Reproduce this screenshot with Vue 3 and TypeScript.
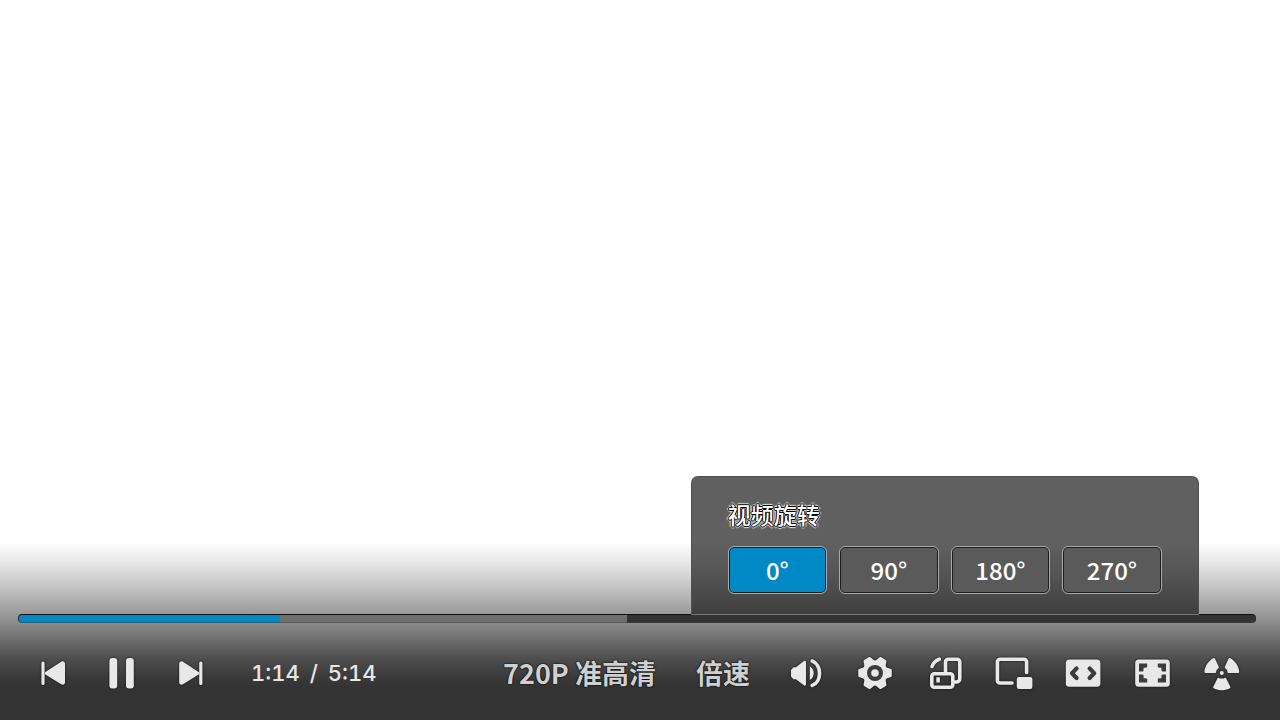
<script setup lang="ts">
import { computed, ref } from 'vue'

const angles = [0, 90, 180, 270]
const angle = ref(0)
const position = ref(212)
const buffered = 492
const playing = ref(true)

const trackStyle = computed(() => ({
  '--played': `${position.value / 10}%`,
  '--buffered': `${buffered / 10}%`,
}))
</script>

<template>
  <main class="player">
    <div class="panel">
      <input
        v-model.number="position"
        class="progress"
        type="range"
        min="0"
        max="1000"
        aria-label="播放进度"
        :style="trackStyle"
      />
      <div class="controls">
        <div class="transport">
          <button class="icon" type="button" aria-label="上一个">
            <svg viewBox="0 0 36 36">
              <rect x="6.4" y="6.5" width="3.2" height="23.5" rx="1.6" />
              <path d="M10 17.2 26.2 6.8c1.8-1 3.8-.2 3.8 2v18.5c0 2.2-2 3-3.8 2L10 19.3Z" />
            </svg>
          </button>
          <button class="icon" type="button" aria-label="暂停" @click="playing = !playing">
            <svg viewBox="0 0 36 36">
              <rect x="5.4" y="3" width="7.8" height="30.4" rx="3" />
              <rect x="22" y="3" width="7.8" height="30.4" rx="3" />
            </svg>
          </button>
          <button class="icon" type="button" aria-label="下一个">
            <svg viewBox="0 0 36 36">
              <rect x="26.2" y="6.5" width="3.2" height="23.5" rx="1.6" />
              <path d="M26 17.2 10 6.8c-1.8-1-3.8-.2-3.8 2v18.5c0 2.2 2 3 3.8 2L26 19.3Z" />
            </svg>
          </button>
        </div>
        <div class="time"><span>1:14</span><span>/</span><span>5:14</span></div>

        <button class="label quality" type="button">720P 准高清</button>
        <button class="label speed" type="button">倍速</button>

        <div class="tools">
          <button class="icon" type="button" aria-label="音量">
            <svg viewBox="0 0 36 36">
              <path d="M5.5 12.3H8L15.500 6.300c1.300-1 2.500-.6 2.500 1v21.800c0 1.600-1.200 2-2.500 1L8 24.200H5.500L3 21.500v-6.500Z" />
              <path d="M21.800 11.500c5.200 2.500 5.200 10.900 0 13.400Z" />
              <path class="line" d="M24.200 6C34 9.500 34 26.900 24.200 30.400" />
            </svg>
          </button>
          <button class="icon" type="button" aria-label="设置">
            <svg viewBox="-18 -18 36 36">
              <g class="gear">
                <circle r="12.600" />
                <path
                  v-for="turn in 6"
                  :key="turn"
                  d="M9-5.200 15.500-2.800V2.800L9 5.200Z"
                  :transform="`rotate(${turn * 60})`"
                />
              </g>
              <circle class="hole" r="8" />
              <circle r="3.800" />
            </svg>
          </button>
          <div class="rotate">
            <button class="icon" type="button" aria-label="视频旋转" aria-expanded="true">
              <svg viewBox="0 0 36 36">
                <g class="line">
                  <rect x="4.800" y="18.800" width="21" height="13.400" rx="2.500" />
                  <path d="M18.500 17V7a2.800 2.800 0 0 1 2.800-2.800H30A2.800 2.800 0 0 1 32.800 7v16.500A3.500 3.500 0 0 1 29.300 27H28M5 11.500Q7 6 12.200 4.200" />
                </g>
                <rect x="9.300" y="22.300" width="3.600" height="5.200" rx=".5" />
              </svg>
            </button>
            <section class="popup" aria-label="视频旋转">
              <h2>视频旋转</h2>
              <div class="angles">
                <button
                  v-for="item in angles"
                  :key="item"
                  type="button"
                  :class="{ active: item === angle }"
                  :aria-pressed="item === angle"
                  @click="angle = item"
                >
                  {{ item }}°
                </button>
              </div>
            </section>
          </div>
          <button class="icon" type="button" aria-label="画中画">
            <svg viewBox="0 0 36 36">
              <path class="line" d="M16 28H4a2.600 2.600 0 0 1-2.600-2.600V6.800A2.600 2.600 0 0 1 4 4.200h24a2.600 2.600 0 0 1 2.600 2.600V17.500" />
              <rect x="20.800" y="22" width="15.600" height="12" rx="2" />
            </svg>
          </button>
          <button class="icon" type="button" aria-label="宽屏">
            <svg viewBox="0 0 36 36">
              <rect x=".8" y="4.500" width="34.600" height="27.300" rx="3.500" />
              <path class="cut" d="M11.600 13.400 7 18.200l4.600 4.800M24.600 13.400l4.600 4.800-4.600 4.800" />
            </svg>
          </button>
          <button class="icon" type="button" aria-label="全屏">
            <svg viewBox="0 0 36 36">
              <rect x=".2" y="4.500" width="34.600" height="27.300" rx="3.500" />
              <path class="hole" d="M4 8.500H12.200v3.600l-1.200.7H8.600v2.600l-.8 1H4ZM31 8.500H22.800v3.600l1.200.7h2.400v2.600l.8 1H31ZM4 27.500H12.200v-3.600l-1.200-.7H8.600v-2.600l-.8-1H4ZM31 27.500H22.800v-3.600l1.200-.7h2.400v-2.600l.8-1H31Z" />
            </svg>
          </button>
          <button class="icon" type="button" aria-label="弹幕">
            <svg viewBox="0 0 36 36">
              <circle cx="17.800" cy="18" r="2" />
              <path d="M1.500 17.900H11c.9 0 1-.5 1.200-1.500.2-1.300 1-2.200 1.900-3 .8-.7.900-1.100.5-2L11.200 4c-.5-1.100-1.100-1.400-2.200-.7C4 6.400 1 11.300.4 16.500c-.1 1 .2 1.400 1.100 1.400Z" />
              <path d="M34.100 17.900h-9.500c-.9 0-1-.5-1.200-1.500-.2-1.300-1-2.200-1.900-3-.8-.7-.9-1.100-.5-2L24.400 4c.5-1.100 1.100-1.400 2.200-.7 5 3.100 8 8 8.600 13.200.1 1-.2 1.400-1.100 1.400Z" />
              <path d="M14.700 22.900c2 .8 4.200.8 6.200 0 .6-.2 1 0 1.300.6l4 7.900c.5 1 .3 1.500-.7 2-4.900 2.400-10.500 2.400-15.400 0-1-.5-1.200-1-.7-2l4-7.900c.3-.6.700-.8 1.300-.6Z" />
            </svg>
          </button>
        </div>
      </div>
    </div>
  </main>
</template>

<style>
body {
  background: #fff;
}
</style>

<style scoped>
.player {
  min-height: 100vh;
  display: flex;
  flex-direction: column;
  justify-content: flex-end;
  font-family: "Noto Sans CJK SC", sans-serif;
}

.panel {
  display: flex;
  flex-direction: column;
  padding: 72px 24px 17px 18px;
  background: linear-gradient(#fff, #e6e6e6 22px, #b0b0b0 58px, #898989 82px, #6a6a6a 100px, #4c4c4c 118px, #393939 136px, #333 146px);
}

button {
  border: 0;
  padding: 0;
  font: inherit;
  color: inherit;
  background: none;
  cursor: pointer;
}

.progress {
  appearance: none;
  box-sizing: border-box;
  width: 100%;
  height: 9px;
  margin: 0;
  border: 1px solid #2a2a2a;
  border-top-color: #111;
  border-bottom-color: #4448;
  border-radius: 4px;
  background: linear-gradient(
    90deg,
    #0089c4 var(--played),
    #707070 var(--played) var(--buffered),
    #333 var(--buffered)
  ) border-box;
  cursor: pointer;
}

.progress::-webkit-slider-thumb {
  appearance: none;
  width: 1px;
  height: 1px;
}

.controls {
  display: flex;
  align-items: center;
  height: 60px;
  margin-top: 20px;
  padding: 0 0 0 17px;
}

.transport {
  display: flex;
  gap: 33px;
}

.icon {
  display: block;
  width: 36px;
  height: 36px;
}

.icon svg {
  display: block;
  width: 36px;
  height: 36px;
  overflow: visible;
  fill: #e8e8e8;
  filter: drop-shadow(0 0 1px #111);
}

.icon .line {
  fill: none;
  stroke: #e8e8e8;
  stroke-width: 3.6;
  stroke-linecap: round;
  stroke-linejoin: round;
}

.gear {
  stroke: #e8e8e8;
  stroke-width: 2.5;
  stroke-linejoin: round;
}

.gear circle {
  stroke: none;
}

.hole {
  fill: #3c3c3c;
}

.cut {
  fill: none;
  stroke: #3c3c3c;
  stroke-width: 4.2;
  stroke-linecap: round;
  stroke-linejoin: round;
}

.time {
  display: flex;
  gap: 10px;
  margin-left: 42px;
  font: 500 22px/32px Inter, sans-serif;
  font-variant-numeric: tabular-nums;
  color: #e6e6e6;
}

.label {
  font-weight: 700;
  font-size: 27px;
  line-height: 40px;
  white-space: nowrap;
  color: #d0d0d0;
  text-shadow: 0 0 2px #000, 0 0 1px #000;
}

.quality {
  margin-left: auto;
}

.speed {
  margin: 0 38px 0 40px;
}

.tools {
  display: flex;
  justify-content: space-between;
  width: 452px;
  margin-right: 16px;
}

.rotate {
  position: relative;
}

.popup {
  position: absolute;
  bottom: 76px;
  left: 50%;
  transform: translateX(-50%);
  box-sizing: border-box;
  width: 508px;
  padding: 19px 36px 20px;
  border: 1px solid #505050;
  border-bottom: 1px solid #777;
  border-radius: 7px 7px 0 0;
  background: linear-gradient(#606060 66px, #555 96px, #3f3f3f);
}

h2 {
  margin: 0 0 14px;
  font-size: 23px;
  font-weight: 500;
  line-height: 36px;
  color: #fff;
  text-shadow: 1px 0 #000, -1px 0 #000, 0 1px #000, 0 -1px #000, 2px 0 1px #ddd, -2px 0 1px #ddd, 0 2px 1px #ddd, 0 -2px 1px #ddd;
}

.angles {
  display: grid;
  grid-template-columns: repeat(4, 1fr);
  gap: 12px;
}

.angles button {
  height: 48px;
  border: 1px solid #aaa;
  border-radius: 6px;
  background: #5a5a5a;
  box-shadow: inset 0 0 0 1px #1c1c1c;
  font-size: 24px;
  font-weight: 500;
  line-height: 44px;
  color: #fff;
}

.angles .active {
  background: #0089c4;
}
</style>
